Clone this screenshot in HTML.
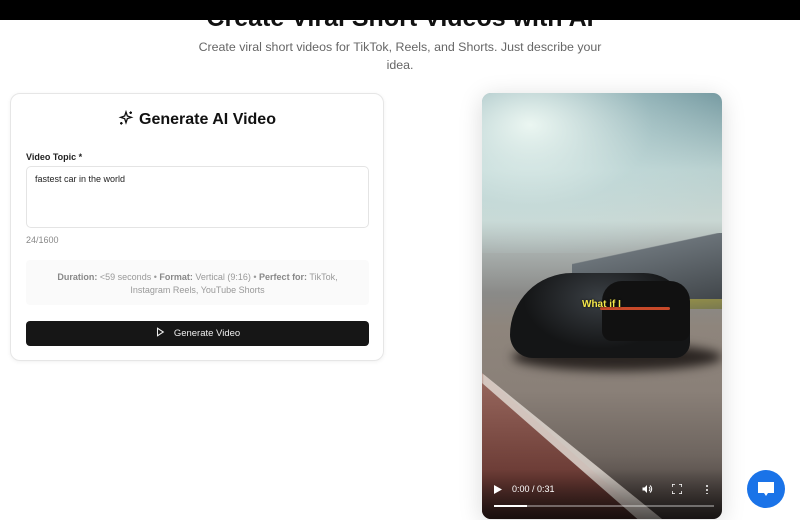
<!DOCTYPE html>
<html><head><style>
*{box-sizing:border-box;margin:0;padding:0}
html,body{width:800px;height:520px;overflow:hidden}
body{background:#fff;font-family:"Liberation Sans",sans-serif;position:relative}
.hdr{position:absolute;left:0;top:0;width:800px;height:20px;background:#000;z-index:5}
.title{position:absolute;top:4px;width:800px;text-align:center;font-size:25px;font-weight:bold;color:#111}
.sub{position:absolute;top:38px;left:195px;width:410px;text-align:center;font-size:12.4px;line-height:18px;color:#666}
.card{position:absolute;left:10px;top:93px;width:374px;height:268px;border:1px solid #e6e6e6;border-radius:10px;box-shadow:0 1px 4px rgba(0,0,0,.06)}
.h2{position:absolute;top:110px;left:0;width:394px;text-align:center;font-size:16px;font-weight:bold;color:#111}
.lbl{position:absolute;left:26px;top:152px;font-size:9px;font-weight:bold;color:#222}
.ta{position:absolute;left:26px;top:166px;width:343px;height:62px;border:1px solid #e4e4e4;border-radius:5px;font-size:9px;color:#222;padding:7px 8px}
.cnt{position:absolute;left:26px;top:235px;font-size:9px;color:#888}
.info{position:absolute;left:26px;top:260px;width:343px;height:45px;background:#fafafa;border-radius:4px;font-size:9px;color:#999;text-align:center;line-height:13px;padding-top:11px}
.info b{color:#888}
.btn{position:absolute;left:26px;top:321px;width:343px;height:25px;background:#161616;border-radius:4px;color:#eee;font-size:9.5px;text-align:center;line-height:25px}
.vid{position:absolute;left:482px;top:93px;width:240px;height:426px;border-radius:9px;overflow:hidden;box-shadow:0 4px 24px rgba(0,0,0,.15);
background:linear-gradient(180deg,#6f949c 0%,#b9d0cf 18%,#c9d7d3 30%,#a9b0ae 37%,#8a8a88 47%,#8e857c 55%,#8a8078 70%,#6e655f 85%,#3a3230 100%)}
.sky{position:absolute;left:0;top:0;width:240px;height:160px;background:radial-gradient(ellipse at 20% 20%,rgba(240,250,245,.95),rgba(200,225,225,.4) 45%,rgba(70,110,120,0) 80%)}
.stand{position:absolute;left:90px;top:140px;width:150px;height:70px;background:linear-gradient(168deg,transparent 30%,#6b7379 31%,#3f4448 100%)}
.grass{position:absolute;left:0;top:206px;width:240px;height:10px;background:linear-gradient(175deg,transparent 40%,#9a9446 42%,#7a7a50 100%)}
.shadow{position:absolute;left:30px;top:250px;width:210px;height:28px;background:#2b2522;border-radius:50%;filter:blur(5px)}
.car{position:absolute;left:28px;top:180px;width:180px;height:85px;background:radial-gradient(ellipse at 50% 30%,#3a3f44,#141516 60%);border-radius:80px 60px 20px 30px}
.car2{position:absolute;left:120px;top:188px;width:88px;height:60px;background:#111;border-radius:20px 20px 10px 10px}
.tail{position:absolute;left:118px;top:214px;width:70px;height:3px;background:#c84a2a;border-radius:2px}
.curb{position:absolute;left:0;top:280px;width:240px;height:150px;background:linear-gradient(180deg,#9a6a60,#6a3a34 70%,#3a2220);clip-path:polygon(0 0,0 100%,170px 100%)}
.stripe{position:absolute;left:0;top:280px;width:240px;height:150px;background:#e0d8d0;clip-path:polygon(0 0,0 10px,160px 150px,185px 150px);opacity:.85;filter:blur(1px)}
.cap{position:absolute;left:100px;top:206px;font-size:10px;color:#f3e64a;font-weight:bold;text-shadow:0 0 2px #000}
.ctrl{position:absolute;left:0;bottom:0;width:240px;height:50px;background:linear-gradient(transparent,rgba(0,0,0,.6))}
.tm{position:absolute;left:30px;top:391px;font-size:9px;color:#fff}
.bar{position:absolute;top:505px;width:220px;height:2px;background:rgba(255,255,255,.35)}
.bar i{display:block;width:33px;height:2px;background:#fff}
.chat{position:absolute;left:747px;top:470px;width:38px;height:38px;border-radius:50%;background:#1a73e8}
</style></head><body>
<div class="title">Create Viral Short Videos with AI</div>
<div class="hdr"></div>
<div class="sub">Create viral short videos for TikTok, Reels, and Shorts. Just describe your idea.</div>
<div class="card"></div>
<div class="h2"><svg width="16" height="16" viewBox="0 0 24 24" style="vertical-align:-2px;margin-right:5px" fill="none" stroke="#111" stroke-width="2"><path d="M12 3l2 6 6 2-6 2-2 6-2-6-6-2 6-2z"/><path d="M19 2v4M17 4h4M5 18v4M3 20h4"/></svg>Generate AI Video</div>
<div class="lbl">Video Topic *</div>
<div class="ta">fastest car in the world</div>
<div class="cnt">24/1600</div>
<div class="info"><b>Duration:</b> &lt;59 seconds • <b>Format:</b> Vertical (9:16) • <b>Perfect for:</b> TikTok,<br>Instagram Reels, YouTube Shorts</div>
<div class="btn"><svg width="10" height="10" viewBox="0 0 24 24" style="vertical-align:-1px;margin-right:9px" fill="none" stroke="#eee" stroke-width="2.5"><path d="M6 3l14 9-14 9z"/></svg>Generate Video</div>
<div class="vid">
<div class="sky"></div><div class="stand"></div><div class="grass"></div>
<div class="curb"></div><div class="stripe"></div>
<div class="shadow"></div><div class="car"></div><div class="car2"></div><div class="tail"></div>
<div class="cap">What if I</div>
<div class="ctrl"></div>
<svg style="position:absolute;left:12px;top:392px" width="8" height="9" viewBox="0 0 8 9"><path d="M0 0l8 4.5L0 9z" fill="#fff"/></svg>
<div class="tm">0:00 / 0:31</div>
<svg style="position:absolute;left:159px;top:390px" width="12" height="12" viewBox="0 0 24 24" fill="#fff"><path d="M3 9v6h4l5 5V4L7 9z"/><path d="M16 8a5 5 0 010 8M18 5a9 9 0 010 14" stroke="#fff" stroke-width="2" fill="none"/></svg>
<svg style="position:absolute;left:190px;top:391px" width="10" height="10" viewBox="0 0 10 10" fill="none" stroke="#fff" stroke-width="1.5"><path d="M0 3V0h3M7 0h3v3M10 7v3H7M3 10H0V7"/></svg>
<div style="position:absolute;left:224px;top:391px;width:2px;height:10px;background:radial-gradient(circle,#fff 1px,transparent 1px) 0 0/2px 4px"></div>
</div>
<div class="bar" style="left:494px"><i></i></div>
<div class="chat"><svg style="position:absolute;left:10px;top:11px" width="18" height="17" viewBox="0 0 18 17"><path d="M1 1h16v11H11l-2 3-2-3H1z" fill="#fff"/></svg></div>
</body></html>
